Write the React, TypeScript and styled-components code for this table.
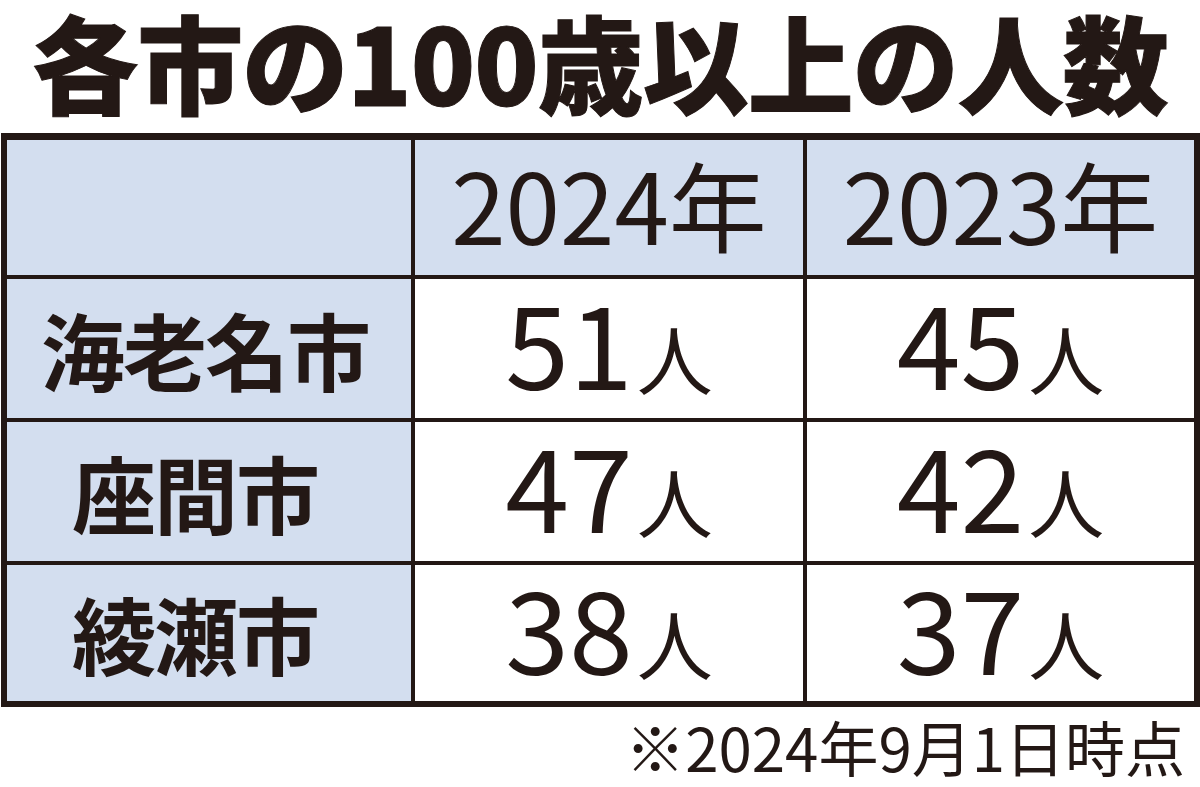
import React from "react";
import styled, { createGlobalStyle } from "styled-components";

const Global = createGlobalStyle`
  html, body { margin: 0; padding: 0; background: #ffffff; }
  body { font-family: "Noto Sans CJK JP", "Noto Sans", sans-serif; color: #231815; }
`;

const Page = styled.div`
  width: 1200px;
  height: 787px;
  overflow: hidden;
  display: flex;
  flex-direction: column;
`;

const Title = styled.h1`
  margin: 0 0 13px 0;
  height: 120px;
  line-height: 120px;
  font-size: 106px;
  font-weight: 900;
  text-align: center;
  white-space: nowrap;
  letter-spacing: -1px;
  -webkit-text-stroke: 1px #231815;
`;

const Table = styled.div`
  margin-left: 1px;
  width: 1199px;
  box-sizing: border-box;
  display: grid;
  grid-template-columns: 404px 388px 1fr;
  grid-template-rows: 135px 139px 139px 136px;
  gap: 4px;
  background: #231815;
  border: 6px solid #231815;
  border-top-width: 7px;
`;

const Cell = styled.div<{ $shade?: boolean; $shift?: number }>`
  display: flex;
  align-items: center;
  justify-content: center;
  background: ${(p) => (p.$shade ? "#d3deef" : "#ffffff")};
  padding-right: ${(p) => p.$shift ?? 0}px;
  white-space: nowrap;
`;

const Year = styled.span`
  font-size: 98px;
  font-weight: 400;
  line-height: 1;
  padding-bottom: 12px;
`;

const City = styled.span`
  font-size: 84px;
  font-weight: 700;
  line-height: 1;
  letter-spacing: -2px;
`;

const Count = styled.span`
  display: flex;
  align-items: baseline;
  line-height: 1;
  padding-bottom: 16px;
`;

const Num = styled.span`
  font-size: 115px;
  font-weight: 400;
`;

const Unit = styled.span`
  font-size: 76px;
  font-weight: 400;
  margin-left: 4px;
`;

const Note = styled.div`
  height: 78px;
  line-height: 78px;
  font-size: 60px;
  font-weight: 400;
  text-align: right;
  padding-right: 15px;
  white-space: nowrap;
`;

const rows = [
  { city: "海老名市", a: "51", b: "45", shift: 8 },
  { city: "座間市", a: "47", b: "42", shift: 28 },
  { city: "綾瀬市", a: "38", b: "37", shift: 28 },
];

export default function App() {
  return (
    <Page>
      <Global />
      <Title>各市の100歳以上の人数</Title>
      <Table>
        <Cell $shade />
        <Cell $shade>
          <Year>2024年</Year>
        </Cell>
        <Cell $shade>
          <Year>2023年</Year>
        </Cell>
        {rows.map((r) => (
          <React.Fragment key={r.city}>
            <Cell $shade $shift={r.shift}>
              <City>{r.city}</City>
            </Cell>
            <Cell>
              <Count>
                <Num>{r.a}</Num>
                <Unit>人</Unit>
              </Count>
            </Cell>
            <Cell>
              <Count>
                <Num>{r.b}</Num>
                <Unit>人</Unit>
              </Count>
            </Cell>
          </React.Fragment>
        ))}
      </Table>
      <Note>※2024年9月1日時点</Note>
    </Page>
  );
}
